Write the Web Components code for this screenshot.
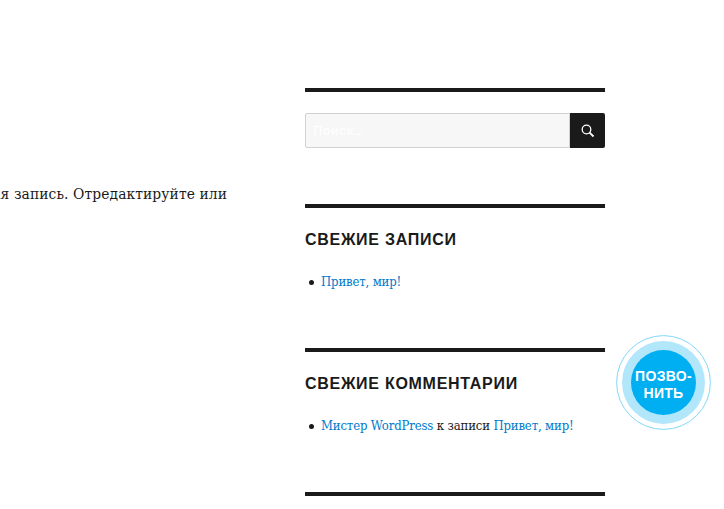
<!DOCTYPE html>
<html lang="ru">
<head>
<meta charset="utf-8">
<title>Сайт</title>
<style>
html, body { margin: 0; height: 100%; overflow: hidden; background: #fff; }
body { color: #1a1a1a; font-family: "DejaVu Serif Condensed", "DejaVu Serif", serif; font-stretch: condensed; }
a { color: #007acc; text-decoration: none; }
</style>
</head>
<body>
<blog-page>
  <entry-text slot="entry">ая запись. Отредактируйте или</entry-text>
  <side-widget><search-form></search-form></side-widget>
  <side-widget heading="СВЕЖИЕ ЗАПИСИ"><widget-item><a href="#">Привет, мир!</a></widget-item></side-widget>
  <side-widget heading="СВЕЖИЕ КОММЕНТАРИИ"><widget-item><a href="#">Мистер WordPress</a> к записи <a href="#">Привет, мир!</a></widget-item></side-widget>
  <side-widget></side-widget>
  <call-button slot="overlay">ПОЗВО-<br>НИТЬ</call-button>
</blog-page>
<script>
const define = (name, html, setup) => customElements.define(name, class extends HTMLElement {
  constructor() {
    super();
    const t = document.createElement('template');
    t.innerHTML = html;
    this.attachShadow({ mode: 'open' }).append(t.content.cloneNode(true));
    if (setup) setup(this);
  }
});

define('blog-page', `<style>
:host { display: grid; grid-template-columns: 305px 300px; height: 509px; position: relative; overflow: hidden; }
main { padding-top: 180px; }
aside { padding-top: 88px; }
</style><main><slot name="entry"></slot></main><aside><slot></slot></aside><slot name="overlay"></slot>`);

define('entry-text', `<style>
:host { display: flex; justify-content: flex-end; width: 227px; white-space: nowrap; font-size: 15.4px; line-height: 28px; letter-spacing: .1px; }
</style><slot></slot>`);

define('side-widget', `<style>
:host { display: block; box-sizing: border-box; height: 144px; border-top: 4px solid #1a1a1a; padding-top: 21px; }
:host(:first-of-type) { height: 116px; }
h2 { margin: 0 0 21px; font: bold 16px/21px "Liberation Sans", Arial, sans-serif; letter-spacing: .72px; white-space: nowrap; }
h2:empty { display: none; }
</style><h2></h2><slot></slot>`, el => { el.shadowRoot.querySelector('h2').textContent = el.getAttribute('heading') || ''; });

define('widget-item', `<style>
:host { display: flex; align-items: center; height: 21px; font-size: 13px; line-height: 21px; white-space: nowrap; letter-spacing: -.15px; }
i { flex: none; width: 5px; height: 5px; margin: 1px 7px 0 4px; border-radius: 50%; background: #1a1a1a; }
</style><i></i><span><slot></slot></span>`);

define('search-form', `<style>
:host { display: flex; height: 35px; }
.field { flex: 1; box-sizing: border-box; border: 1px solid #d1d1d1; border-radius: 2px 0 0 2px; background: #f7f7f7; color: #fff; padding-left: 7px; font: 13px/33px Roboto, sans-serif; letter-spacing: .7px; }
.go { width: 35px; border-radius: 0 2px 2px 0; background: #1a1a1a; }
svg { display: block; }
</style><div class="field">Поиск…</div><div class="go"><svg width="35" height="35" fill="none" stroke="#fff"><circle cx="16.5" cy="16.5" r="4.3" stroke-width="1.3"/><path d="M19.6 19.6L23.5 23.5" stroke-width="1.8"/></svg></div>`);

define('call-button', `<style>
:host { position: absolute; left: 616px; top: 335px; width: 95px; height: 95px; }
svg { position: absolute; inset: 0; }
div { position: relative; padding-top: 33px; text-align: center; color: #fff; font: bold 14px/17px "Liberation Sans", Arial, sans-serif; letter-spacing: .3px; white-space: nowrap; }
</style><svg width="95" height="95"><circle cx="47.5" cy="47.5" r="46.9" fill="#fff" stroke="#80d7f8"/><circle cx="47.5" cy="47.5" r="41.5" fill="#b2e7fb"/><circle cx="47.5" cy="47.5" r="32.5" fill="#00aff2"/></svg><div><slot></slot></div>`);
</script>
</body>
</html>
